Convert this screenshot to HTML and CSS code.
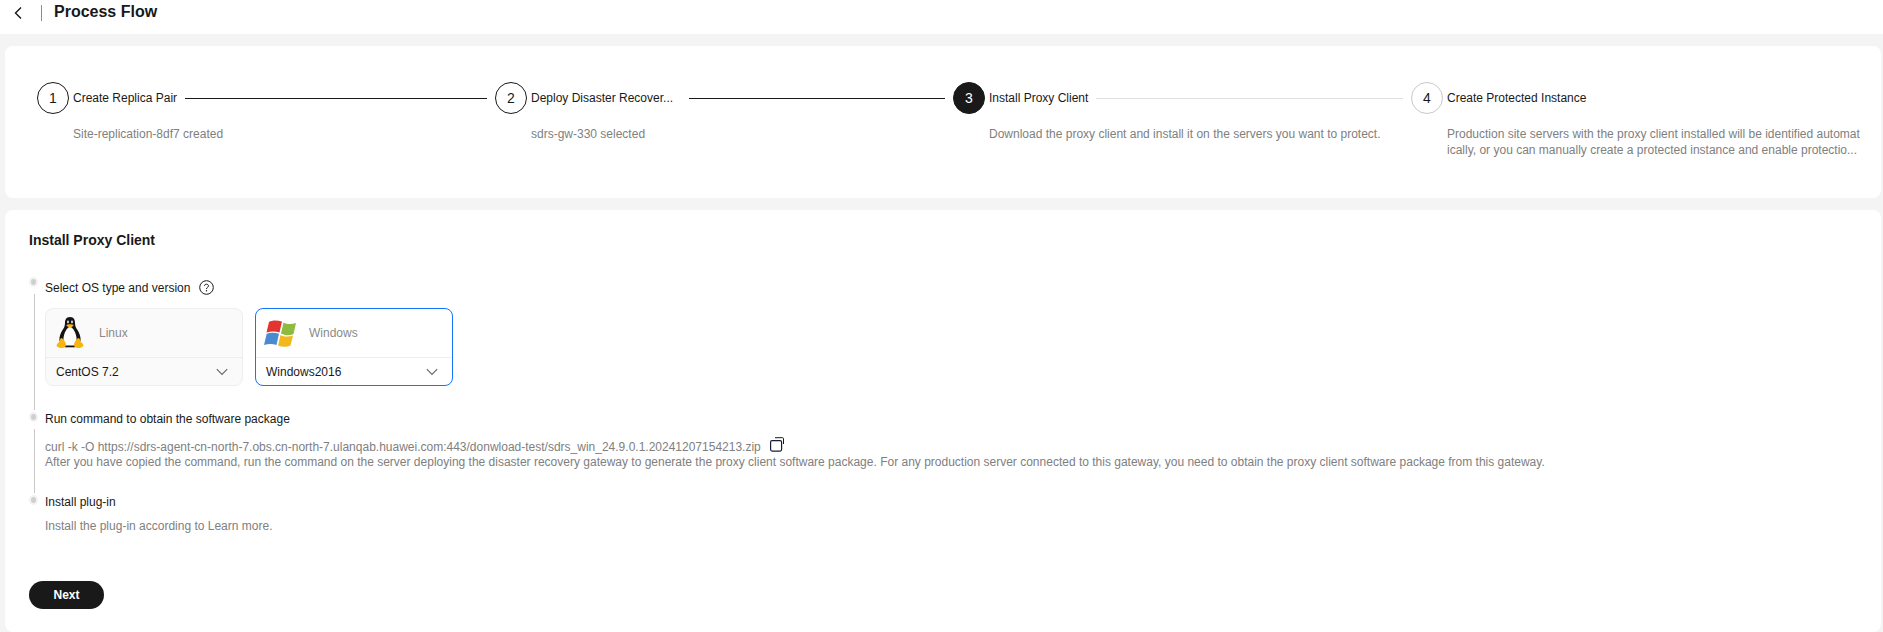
FILE: index.html
```html
<!DOCTYPE html>
<html lang="en">
<head>
<meta charset="utf-8">
<title>Process Flow</title>
<link rel="stylesheet" href="styles.css">
</head>
<body>
<header class="topbar">
  <svg class="back" width="10" height="14" viewBox="0 0 10 14"><path d="M8 1.500 2.500 7 8 12.500" fill="none" stroke="#191919" stroke-width="1.400"/></svg>
  <span class="topbar-sep"></span>
  <h1 class="page-title">Process Flow</h1>
</header>
<main class="content">
  <section class="card steps-card">
    <ol class="steps">
      <li class="step">
        <div class="step-head"><span class="num done">1</span><span class="step-title">Create Replica Pair</span><span class="conn dark"></span></div>
        <p class="step-desc">Site-replication-8df7 created</p>
      </li>
      <li class="step">
        <div class="step-head"><span class="num done">2</span><span class="step-title trunc">Deploy Disaster Recover...</span><span class="conn dark"></span></div>
        <p class="step-desc">sdrs-gw-330 selected</p>
      </li>
      <li class="step">
        <div class="step-head"><span class="num active">3</span><span class="step-title">Install Proxy Client</span><span class="conn"></span></div>
        <p class="step-desc">Download the proxy client and install it on the servers you want to protect.</p>
      </li>
      <li class="step last">
        <div class="step-head"><span class="num todo">4</span><span class="step-title">Create Protected Instance</span></div>
        <p class="step-desc">Production site servers with the proxy client installed will be identified automat<br>ically, or you can manually create a protected instance and enable protectio...</p>
      </li>
    </ol>
  </section>
  <section class="card main-card">
    <h2 class="section-title">Install Proxy Client</h2>
    <div class="timeline">
      <div class="tl-item tl-os">
        <div class="tl-rail"><span class="dot"></span><span class="rail"></span></div>
        <div class="tl-body">
          <div class="tl-label tl-label-os">Select OS type and version
            <svg class="help" width="15" height="15" viewBox="0 0 15 15"><circle cx="7.500" cy="7.500" r="6.800" fill="none" stroke="#191919"/><path d="M5.500 6C5.500 4.800 6.400 4.200 7.500 4.200s2 .7 2 1.700C9.500 7.300 7.500 7.300 7.500 9" fill="none" stroke="#191919"/><circle cx="7.500" cy="10.800" r=".7" fill="#191919"/></svg>
          </div>
          <div class="os-cards">
            <div class="os-card">
              <div class="os-top">
                <span class="os-icon">
                  <svg width="28" height="34" viewBox="0 0 28 34">
                    <path d="M14 1C10 1 9 4 9 7c0 3-1 5-2.500 7-2 3-3.500 7-3 11l21 0c.5-4-1-8-3-11C20 12 19 10 19 7c0-3-1-6-5-6z" fill="#15131a"/>
                    <path d="M14 11c-3 0-6 6-6.500 11C7 27 10 30 14 30s7-3 6.500-8C20 17 17 11 14 11z" fill="#fff"/>
                    <rect x="9" y="29.500" width="10" height="1.800" fill="#15131a"/>
                    <ellipse cx="12" cy="6" rx="1" ry="1.400" fill="#d8d8d8"/><ellipse cx="16" cy="6" rx="1" ry="1.400" fill="#d8d8d8"/>
                    <path d="M10.500 9c1-1 6-1 7 0 .4.800-2.300 2.500-3.500 2.500S10 9.800 10.500 9z" fill="#f6b60f"/>
                    <path d="M5 22c2 0 4 3 5 6 .5 3-2 4-5 4-2 0-4-1-4.500-2.500C1 27 3 27 3.500 25 4 23.500 4.500 22.500 5 22zM23 22c-2 0-4 3-5 6-.5 3 2 4 5 4 2 0 4-1 4.500-2.500C27 27 25 27 24.500 25 24 23.500 23.500 22.500 23 22z" fill="#f6b60f"/>
                  </svg>
                </span>
                <span class="os-name">Linux</span>
              </div>
              <div class="os-select"><span>CentOS 7.2</span><svg width="12" height="8" viewBox="0 0 12 8"><path d="M.8 1.200 6 6.500l5.200-5.300" fill="none" stroke="#666" stroke-width="1.100"/></svg></div>
            </div>
            <div class="os-card selected">
              <div class="os-top">
                <span class="os-icon">
                  <svg width="32" height="27" viewBox="0 0 32 27">
                    <path d="M5 2C8 0 13 0 18 1.500L15.500 12.500C11.500 11 7 11 2.500 12.500z" fill="#e2352f"/>
                    <path d="M19.500 2.500C23 4.500 28 4.500 32 3L29.500 14C25.500 16 21 15.500 17 13.500z" fill="#8cbb3f"/>
                    <path d="M2.700 13.800C6.500 12 11 12.500 15 13.800L12.500 25C9 23.500 4 23.500 0 25z" fill="#4a8ad0"/>
                    <path d="M16.500 15C20 17 25 17 29 15.500L26.500 25.500C22.500 27.500 18 27 14 25.500z" fill="#f4b81f"/>
                  </svg>
                </span>
                <span class="os-name">Windows</span>
              </div>
              <div class="os-select"><span>Windows2016</span><svg width="12" height="8" viewBox="0 0 12 8"><path d="M.8 1.200 6 6.500l5.200-5.300" fill="none" stroke="#666" stroke-width="1.100"/></svg></div>
            </div>
          </div>
        </div>
      </div>
      <div class="tl-item tl-run">
        <div class="tl-rail"><span class="dot"></span><span class="rail"></span></div>
        <div class="tl-body">
          <div class="tl-label">Run command to obtain the software package</div>
          <div class="tl-text">
            <div class="cmd">curl -k -O https://sdrs-agent-cn-north-7.obs.cn-north-7.ulanqab.huawei.com:443/donwload-test/sdrs_win_24.9.0.1.20241207154213.zip
              <svg class="copy" width="15" height="15" viewBox="0 0 15 15"><rect x=".6" y="3.600" width="11" height="10.500" rx="1.500" fill="none" stroke="#1a1a3a" stroke-width="1.200"/><path d="M5 .7h7.500a1 1 0 0 1 1 1V7" fill="none" stroke="#191919"/></svg>
            </div>
            <div>After you have copied the command, run the command on the server deploying the disaster recovery gateway to generate the proxy client software package. For any production server connected to this gateway, you need to obtain the proxy client software package from this gateway.</div>
          </div>
        </div>
      </div>
      <div class="tl-item tl-install">
        <div class="tl-rail"><span class="dot"></span></div>
        <div class="tl-body">
          <div class="tl-label">Install plug-in</div>
          <div class="tl-text tl-text-install">Install the plug-in according to Learn more.</div>
        </div>
      </div>
    </div>
    <button class="next" type="button">Next</button>
  </section>
</main>
</body>
</html>
```
FILE: styles.css
```css
* { box-sizing: border-box; }
html, body { margin: 0; height: 632px; overflow: hidden; }
body { background: #f4f4f4; color: #191919; font: 12px/16px "Liberation Sans", Arial, sans-serif; width: 1883px; }
.topbar { height: 34px; background: #fff; display: flex; align-items: flex-start; padding-left: 13px; }
.back { margin-top: 6px; }
.topbar-sep { width: 1px; height: 16px; background: #8a8a8a; margin: 5px 12px 0 18px; }
.page-title { margin: 0; font-size: 16px; line-height: 24px; font-weight: 700; }
.content { padding: 12px 2px 0 5px; display: flex; flex-direction: column; gap: 12px; }
.card { background: #fff; border-radius: 8px; }
.steps-card { height: 152px; padding: 36px 20px 0 32px; }
.steps { list-style: none; margin: 0; padding: 0; display: flex; }
.step { width: 458px; flex: none; }
.step.last { width: 449px; }
.step-head { display: flex; align-items: center; height: 32px; }
.num { width: 32px; height: 32px; border-radius: 50%; display: flex; align-items: center; justify-content: center; font-size: 14px; flex: none; border: 1px solid #191919; }
.num.active { background: #191919; color: #fff; }
.num.todo { border-color: #c9c9c9; }
.step-title { margin-left: 4px; white-space: nowrap; }
.step-title.trunc { width: 150px; flex: none; }
.conn { flex: 1; height: 1px; background: #dfdfdf; margin: 0 8px; }
.conn.dark { background: #191919; }
.step-desc { margin: 12px 0 0 36px; color: #808080; }
.main-card { height: 422px; padding: 22px 24px 0; }
.section-title { margin: 0; font-size: 14px; line-height: 16px; font-weight: 700; }
.timeline { margin-top: 29px; }
.tl-item { display: flex; }
.tl-os { height: 135px; }
.tl-run { height: 83px; }
.tl-install { height: 72px; }
.tl-rail { width: 16px; flex: none; display: flex; flex-direction: column; align-items: center; padding-right: 8px; }
.dot { width: 5px; height: 6px; border-radius: 50%; background: #cfcfcf; box-shadow: 0 0 0 2px #f2f2f2; margin-top: 2px; flex: none; }
.rail { width: 1px; flex: 1; background: #c9c9c9; margin: 9px 0 2px 3px; }
.tl-body { flex: 1; min-width: 0; }
.tl-label { line-height: 14px; }
.tl-label-os { display: flex; align-items: center; gap: 9px; padding-top: 3px; }
.os-cards { display: flex; gap: 12px; margin-top: 13px; }
.os-card { width: 198px; height: 78px; border: 1px solid #eeeeee; border-radius: 8px; background: #fafafa; }
.os-card.selected { border-color: #1476ff; background: #fff; }
.os-top { height: 49px; border-bottom: 1px solid #eeeeee; display: flex; align-items: center; padding-left: 8px; }
.os-icon { width: 32px; flex: none; display: flex; justify-content: center; }
.os-name { color: #8a8a8a; margin-left: 13px; }
.os-select { height: 27px; display: flex; align-items: center; justify-content: space-between; padding: 0 14px 0 10px; }
.tl-text { color: #808080; line-height: 15px; margin-top: 14px; }
.tl-text-install { margin-top: 10px; }
.cmd { display: flex; align-items: flex-start; gap: 9px; }
.copy { margin-top: -3px; }
.next { display: block; width: 75px; height: 28px; margin-top: 14px; border: 0; border-radius: 14px; background: #191919; color: #fff; font: 700 12px "Liberation Sans", Arial, sans-serif; }
```
